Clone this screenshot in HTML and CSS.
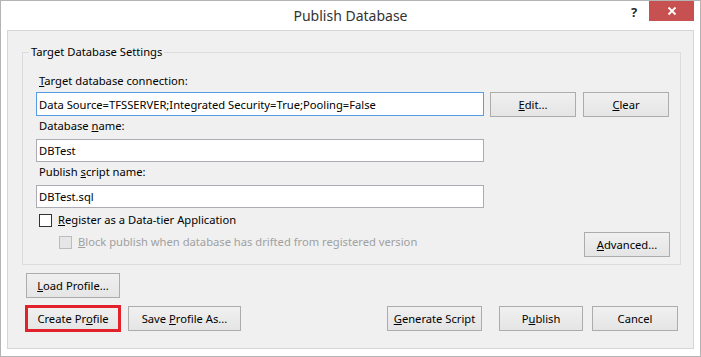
FILE: index.html
```html
<!DOCTYPE html>
<html>
<head>
  <title>Publish Database</title>
  <meta name="viewport" content="width=device-width, initial-scale=1.0">
  <link rel="stylesheet" href="styles.css">
</head>
<body>

  <div class="window">
    <!-- Title bar -->
    <div class="titlebar">
      <div></div>
      <div class="title">Publish Database</div>
      <div class="controls">
        <span class="help">?</span>
        <span class="close">
          <svg width="10" height="10" viewBox="0 0 10 10">
            <path d="M1.5 1.5 L8.5 8.5 M8.5 1.5 L1.5 8.5" stroke="#fff" stroke-width="1.8" />
          </svg>
        </span>
      </div>
    </div>

    <div class="panel">
      <fieldset class="group">
        <legend>Target Database Settings</legend>

        <div class="group-body">
          <div class="label"><u>T</u>arget database connection:</div>
          <div class="conn-row">
            <input type="text" class="textbox focused" value="Data Source=TFSSERVER;Integrated Security=True;Pooling=False">
            <button class="btn btn-edit"><u>E</u>dit...</button>
            <button class="btn btn-clear"><u>C</u>lear</button>
          </div>

          <div class="label label-db">Database <u>n</u>ame:</div>
          <input type="text" class="textbox textbox-short" value="DBTest">

          <div class="label label-script">Publish <u>s</u>cript name:</div>
          <input type="text" class="textbox textbox-short" value="DBTest.sql">

          <label class="check check-register">
            <input type="checkbox">
            <span><u>R</u>egister as a Data-tier Application</span>
          </label>

          <div class="advanced-row">
            <label class="check check-block disabled">
              <input type="checkbox" disabled>
              <span><u>B</u>lock publish when database has drifted from registered version</span>
            </label>
            <button class="btn btn-advanced"><u>A</u>dvanced...</button>
          </div>
        </div>
      </fieldset>

      <div class="profile-row">
        <button class="btn btn-load"><u>L</u>oad Profile...</button>
      </div>

      <div class="footer-row">
        <button class="btn btn-create highlighted">Create Pr<u>o</u>file</button>
        <button class="btn btn-save">Save <u>P</u>rofile As...</button>
        <div class="spacer"></div>
        <button class="btn btn-generate"><u>G</u>enerate Script</button>
        <button class="btn btn-publish">P<u>u</u>blish</button>
        <button class="btn btn-cancel">Cancel</button>
      </div>
    </div>
  </div>

</body>
</html>
```

FILE: styles.css
```css
body {
  margin: 0;
  background: #fff;
}

.window {
  width: 701px;
  height: 357px;
  box-sizing: border-box;
  border: 1px solid #b4b4b4;
  background: #fff;
  display: flex;
  flex-direction: column;
  font-family: "Noto Sans", sans-serif;
  font-size: 11.2px;
  color: #000;
}

/* title bar */
.titlebar {
  height: 29px;
  display: grid;
  grid-template-columns: 1fr auto 1fr;
}

.title {
  font-size: 14px;
  line-height: 30px;
  color: #333;
}

.controls {
  justify-self: end;
  display: flex;
  align-items: flex-start;
  margin-right: 6px;
}

.help {
  width: 26px;
  height: 20px;
  margin-right: 2px;
  text-align: center;
  font-weight: bold;
  font-size: 13px;
  line-height: 22px;
  color: #2b2b2b;
}

.close {
  width: 45px;
  height: 20px;
  background: #c75050;
  display: flex;
  align-items: center;
  justify-content: center;
}

/* content panel */
.panel {
  flex: 1;
  margin: 0 6px 7px;
  border: 1px solid #d6d6d6;
  background: #f0f0f0;
  display: flex;
  flex-direction: column;
}

.group {
  margin: 13px 12px 0 14px;
  padding: 0;
  border: 1px solid #dcdcdc;
  min-width: 0;
}

.group legend {
  margin-left: 6px;
  padding: 0 2px;
  line-height: 16px;
}

.group-body {
  padding: 13px 10px 7px 13px;
}

.label {
  line-height: 16px;
  padding-left: 3px;
  margin-bottom: 3px;
}

.label-db {
  margin-top: 1px;
  margin-bottom: 5px;
}

.label-script {
  margin-top: 2px;
  margin-bottom: 5px;
}

.textbox {
  display: block;
  box-sizing: border-box;
  width: 448px;
  height: 23px;
  margin: 0;
  padding: 0 2px;
  border: 1px solid #abadb3;
  background: #fff;
  font-family: inherit;
  font-size: 11.2px;
  color: #000;
  outline: none;
}

.textbox.focused {
  height: 24px;
  border-color: #569de5;
}

.conn-row {
  display: flex;
}

.btn {
  box-sizing: border-box;
  height: 25px;
  margin: 0;
  padding: 0;
  border: 1px solid #acacac;
  background: linear-gradient(#f0f0f0, #e5e5e5);
  font-family: inherit;
  font-size: 11.2px;
  color: #000;
}

.btn-edit {
  width: 86px;
  margin-left: 6px;
}

.btn-clear {
  width: 86px;
  margin-left: 7px;
}

/* checkboxes */
.check {
  display: flex;
  align-items: center;
  line-height: 16px;
}

.check input {
  appearance: none;
  width: 13px;
  height: 13px;
  margin: 0 6px 0 0;
  border: 1px solid #333;
  background: #fff;
  box-sizing: border-box;
}

.check-register {
  margin-top: 4px;
  padding-left: 3px;
}

.check-block {
  padding-left: 23px;
  align-self: flex-start;
  margin-top: 2px;
}

.check.disabled {
  color: #a0a0a0;
}

.check.disabled input {
  border-color: #bcbcbc;
  background: #e6e6e6;
}

.advanced-row {
  display: flex;
  justify-content: space-between;
  margin-top: 4px;
}

.btn-advanced {
  width: 86px;
}

/* profile and dialog buttons */
.profile-row {
  margin-top: 8px;
  padding-left: 18px;
}

.btn-load {
  width: 94px;
}

.footer-row {
  display: flex;
  margin-top: 8px;
  padding: 0 15px 0 18px;
}

.spacer {
  flex: 1;
}

.btn-create {
  width: 94px;
}

.highlighted {
  outline: 3px solid #e2222a;
  outline-offset: -2px;
}

.btn-save {
  width: 113px;
  margin-left: 8px;
}

.btn-generate {
  width: 95px;
}

.btn-publish {
  width: 84px;
  margin-left: 17px;
}

.btn-cancel {
  width: 86px;
  margin-left: 9px;
}
```
